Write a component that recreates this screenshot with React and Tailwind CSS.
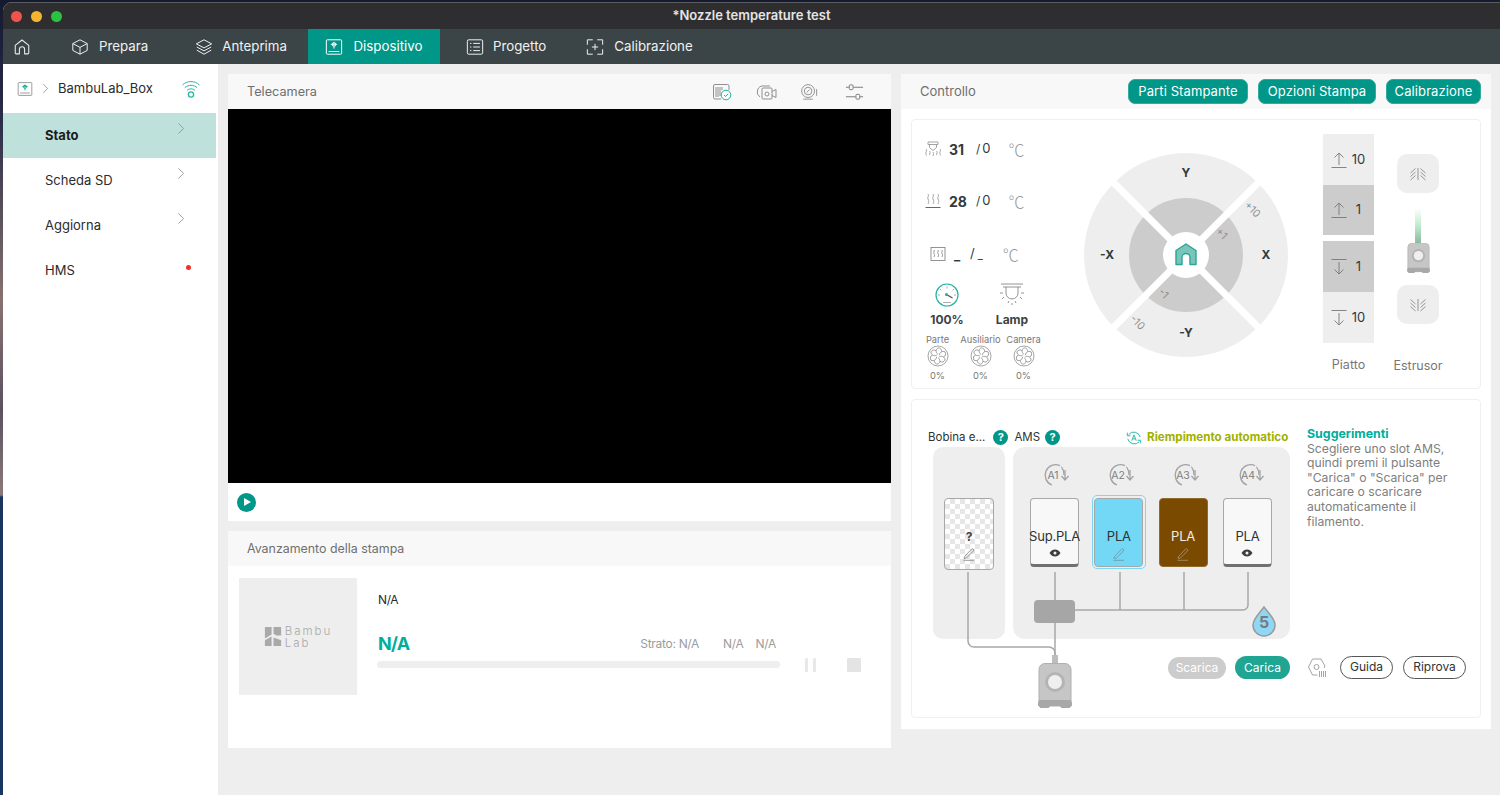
import React from "react";

const font = { fontFamily: "Inter, 'Noto Sans', sans-serif" };

// top bar icons
const HomeIcon = ({ className = "" }) => (
  <svg viewBox="0 0 20 20" className={className} fill="none" stroke="currentColor" strokeWidth="1.2" strokeLinejoin="round">
    <path d="M2.5 8.2 10 2.2l7.5 6v8.4a1 1 0 0 1-1 1h-3.6v-5a2.9 2.9 0 0 0-5.8 0v5H3.5a1 1 0 0 1-1-1z" />
  </svg>
);
const BoxIcon = ({ className = "" }) => (
  <svg viewBox="0 0 20 20" className={className} fill="none" stroke="currentColor" strokeWidth="1.1" strokeLinejoin="round">
    <path d="M10 2 18 6.2v7.6L10 18l-8-4.2V6.2z" />
    <path d="M2 6.2 10 10.4l8-4.2M10 10.4V18" />
  </svg>
);
const LayersIcon = ({ className = "" }) => (
  <svg viewBox="0 0 20 20" className={className} fill="none" stroke="currentColor" strokeWidth="1.1" strokeLinejoin="round">
    <path d="M10 2 18.5 6.5 10 11 1.5 6.5z" />
    <path d="M2 10 10 14.3l8-4.3M2 13.5 10 18l8-4.5" />
  </svg>
);
const DeviceIcon = ({ className = "", accent = "currentColor" }) => (
  <svg viewBox="0 0 20 20" className={className} fill="none" stroke="currentColor" strokeWidth="1.1">
    <rect x="1.5" y="2" width="17" height="16" rx="1" />
    <path d="M4 15h12" />
    <path d="M6.5 7h7M10 4.4v1.2M8.5 5.6h3v3.2h-3zM10 8.8v3" stroke={accent} />
  </svg>
);
const ListIcon = ({ className = "" }) => (
  <svg viewBox="0 0 20 20" className={className} fill="none" stroke="currentColor" strokeWidth="1.1">
    <rect x="1.5" y="2" width="17" height="16" rx="1.5" />
    <path d="M4.5 6H6M8 6h7.5M4.5 10H6M8 10h7.5M4.5 14H6M8 14h7.5" />
  </svg>
);
const CalibIcon = ({ className = "" }) => (
  <svg viewBox="0 0 20 20" className={className} fill="none" stroke="currentColor" strokeWidth="1.1">
    <path d="M1.5 7.5V2h6M12.5 2h6v5.5M18.5 12.5V18h-6M7.5 18h-6v-5.5" />
    <path d="M10 6.5v7M6.500 10h7" />
  </svg>
);
const Chevron = ({ className = "" }) => (
  <svg viewBox="0 0 8 14" className={className} fill="none" stroke="currentColor" strokeWidth="1">
    <path d="M1.2 1.5 6.8 7l-5.6 5.5" />
  </svg>
);

const Tab = ({ icon, label, active, className = "" }) => (
  <div className={`flex h-full items-center text-[13.3px] ${active ? "bg-[#009688] text-white" : "text-[#f0f2f2]"} ${className}`}>
    {icon}
    <span>{label}</span>
  </div>
);

const SideRow = ({ label, active, dot }) => (
  <div className={`mr-[2px] flex h-[45px] items-center justify-between pl-[42px] pr-[31px] text-[13px] ${active ? "bg-[#bfe1dc] font-bold text-[#1c1c1c]" : "text-[#2b2b2b]"}`}>
    <span className="pt-[1px]">{label}</span>
    {dot ? (
      <span className="mb-[7px] mr-[-6px] h-[5px] w-[5px] rounded-full bg-[#f0312b]" />
    ) : (
      <Chevron className={`mb-[15px] h-[13px] w-[8px] ${active ? "text-[#8a9a97]" : "text-[#9a9a9a]"}`} />
    )}
  </div>
);

const PanelHead = ({ title, titleClass = "text-[12.7px]", children }) => (
  <div className="flex h-[35px] shrink-0 items-center justify-between bg-[#f8f8f8] pl-[19px] text-[#6f6f6f]">
    <span className={`pt-[1px] ${titleClass}`}>{title}</span>
    {children}
  </div>
);

const CamIcons = () => (
  <div className="flex items-center gap-[23px] pr-[27px] text-[#8f8f8f]">
    <svg viewBox="0 0 20 18" className="h-[18px] w-[20px]" fill="none" stroke="currentColor" strokeWidth="1">
      <path d="M9 16H3a1.5 1.5 0 0 1-1.5-1.5V3A1.5 1.5 0 0 1 3 1.5h12.5A1.5 1.5 0 0 1 17 3v4" />
      <path d="M4 4v10M6 4v10M8 4v9M10 4v3" />
      <circle cx="14" cy="12" r="4.8" stroke="#19b3a3" fill="#fff" />
      <path d="m12 12 1.5 1.5 2.6-2.800" stroke="#19b3a3" />
    </svg>
    <svg viewBox="0 0 22 18" className="h-[18px] w-[22px]" fill="none" stroke="currentColor" strokeWidth="1">
      <path d="M5 14a6 6 0 0 1 4-11h6" />
      <rect x="7" y="5" width="10" height="11" rx="1" />
      <circle cx="12" cy="11" r="2" />
      <path d="M17 8.5 21 6.5v8L17 12.5" />
    </svg>
    <svg viewBox="0 0 20 18" className="h-[18px] w-[19px]" fill="none" stroke="currentColor" strokeWidth="1">
      <circle cx="8.5" cy="8" r="6.8" />
      <circle cx="8.5" cy="8" r="4" />
      <path d="m7 9.5 3-3M3.5 16.5h10M17.500 6v7" />
    </svg>
    <svg viewBox="0 0 20 18" className="ml-[3px] h-[18px] w-[19px]" fill="none" stroke="#777" strokeWidth="1">
      <path d="M1 4h3M9 4h10M1 14h10M16 14h3" />
      <rect x="4.5" y="1.5" width="4" height="5" rx="1" />
      <rect x="11.5" y="11.5" width="4" height="5" rx="1" />
    </svg>
  </div>
);

const PillButton = ({ label, className = "" }) => (
  <div className={`flex h-[25px] items-center justify-center rounded-[7px] border border-[#33ab9b] bg-[#009688] text-[13px] tracking-[0.1px] text-white ${className}`}>
    {label}
  </div>
);

const Celsius = ({ className = "" }) => (
  <span className={`font-['Noto_Sans_CJK_SC'] text-[16px] font-light leading-[20px] text-[#9a9a9a] ${className}`}>℃</span>
);

const Temp = ({ icon, value, target, className = "" }) => (
  <div className={`flex h-[20px] items-center ${className}`}>
    {icon}
    <span className="ml-[8px] w-[27px] text-[14px] font-bold text-[#323a3d]">{value}</span>
    <span className="text-[13px] text-[#323a3d]">
      <span className="mr-[2px] text-[12px]">/</span>{target}
    </span>
    <Celsius className="ml-[18px]" />
  </div>
);

const FanBlock = ({ label, value }) => (
  <div className="flex w-[43px] flex-col items-center text-[9.3px] text-[#777]">
    <span className="whitespace-nowrap leading-[12px]">{label}</span>
    <svg viewBox="0 0 22 22" className="mt-[-1px] h-[22px] w-[22px]" fill="none" stroke="#8f8f8f" strokeWidth="0.8">
      <circle cx="11" cy="11" r="10" />
      {[0, 60, 120, 180, 240, 300].map((r) => (
        <path key={r} transform={`rotate(${r} 11 11)`} d="M11 9.5C8.5 7.5 8.5 4.5 11 2.8c2.6.2 3.8 1.8 3.6 3.8" />
      ))}
    </svg>
    <span className="mt-[3px] leading-[11px]">{value}</span>
  </div>
);

const JogWheel = () => (
  <svg viewBox="0 0 206 206" className="h-[206px] w-[206px]">
    <circle cx="103" cy="103" r="102" fill="#eeeeee" />
    <circle cx="103" cy="103" r="57" fill="#cccccc" />
    <path d="M30 30 176 176M176 30 30 176" stroke="#fff" strokeWidth="7" />
    <circle cx="103" cy="103" r="23" fill="#fff" />
    <path d="M93 98.5 103 92l10 6.5v14h-6v-7a4 4 0 0 0-8 0v7h-6z" fill="#7ac4b9" stroke="#2ba595" strokeWidth="1.4" strokeLinejoin="round" />
    <g fontFamily="Inter, sans-serif" fontSize="12" fontWeight="700" fill="#323a3d" textAnchor="middle">
      <text x="103" y="25">Y</text>
      <text x="103" y="185">-Y</text>
      <text x="24" y="107">-X</text>
      <text x="183" y="107">X</text>
    </g>
    <g fontFamily="Inter, sans-serif" fontSize="10.5" fill="#8f8f8f" textAnchor="middle">
      <text transform="translate(167 60) rotate(45)">+10</text>
      <text transform="translate(136 84) rotate(45)">+1</text>
      <text transform="translate(78 144) rotate(45)" fill="#8a8a8a">-1</text>
      <text transform="translate(52 173) rotate(45)">-10</text>
    </g>
  </svg>
);

const ArrowUp = () => (
  <svg viewBox="0 0 16 18" className="h-[18px] w-[16px]" fill="none" stroke="#777" strokeWidth="0.9">
    <path d="M8 14V2M3.5 6.5 8 2l4.5 4.5M.5 16.5h15" />
  </svg>
);
const ArrowDown = () => (
  <svg viewBox="0 0 16 18" className="h-[18px] w-[16px]" fill="none" stroke="#777" strokeWidth="0.9">
    <path d="M8 4v12M3.5 11.5 8 16l4.5-4.5M.5 1.5h15" />
  </svg>
);

const BedCell = ({ dir, value, dark, className = "h-[51px]" }) => (
  <div className={`flex items-center justify-center gap-[4px] text-[13px] text-[#323a3d] ${dark ? "bg-[#cccccc]" : "bg-[#eeeeee]"} ${className}`}>
    {dir === "up" ? <ArrowUp /> : <ArrowDown />}
    <span className="w-[16px] text-center">{value}</span>
  </div>
);

const Extruder = ({ className = "" }) => (
  <svg viewBox="0 0 34 45" className={className}>
    <path d="M7 .5h20a6 6 0 0 1 6 6V38l1 4-3 3h-7l-2-2H12l-2 2H3l-3-3 1-4V6.5a6 6 0 0 1 6-6z" fill="#c6c6c6" stroke="#b0b0b0" />
    <path d="M1 37h32l1 5-3 3h-7l-2-2H12l-2 2H3l-3-3z" fill="#a8a8a8" />
    <circle cx="17" cy="19" r="10" fill="#b4b4b4" />
    <circle cx="17" cy="19" r="7" fill="#efefef" />
  </svg>
);

const ExtrudeBtn = ({ up }) => (
  <div className="flex h-[39px] w-[42px] items-center justify-center rounded-[10px] bg-[#eeeeee]">
    <svg viewBox="0 0 18 14" className="h-[14px] w-[18px]" fill="none" stroke="#8a8a8a" strokeWidth="0.9">
      {up ? (
        <path d="M9 1v12M6.5 1.5l-5 4.500M6.500 5l-5 4.500M6.500 8.500l-5 4.500M11.500 1.500l5 4.500M11.500 5l5 4.500M11.500 8.500l5 4.500" />
      ) : (
        <path d="M9 1v12M6.5 6l-5-4.500M6.500 9.500l-5-4.500M6.500 13l-5-4.500M11.500 6l5-4.500M11.500 9.500l5-4.500M11.500 13l5-4.500" />
      )}
    </svg>
  </div>
);

const HelpDot = () => (
  <span className="flex h-[15px] w-[15px] items-center justify-center rounded-full bg-[#009688] text-[11px] font-bold leading-none text-white">?</span>
);

const Pencil = ({ color = "#8d8d8d", className = "" }) => (
  <svg viewBox="0 0 14 14" className={`h-[14px] w-[14px] ${className}`} fill="none" stroke={color} strokeWidth="0.9">
    <path d="M2.5 9.5 9.5 2.2a1.2 1.2 0 0 1 1.8 0 1.2 1.2 0 0 1 0 1.8L4.5 11l-2.500.5zM1.5 13.3H12" />
  </svg>
);

const Eye = () => (
  <svg viewBox="0 0 12 8" className="h-[8px] w-[12px]">
    <path d="M.5 4C2 1.5 4 .5 6 .5s4 1 5.5 3.5C10 6.5 8 7.500 6 7.500S2 6.500.5 4z" fill="#3a3f42" />
    <circle cx="6" cy="4" r="1.5" fill="#f5f5f5" />
  </svg>
);

const SlotLabel = ({ label }) => (
  <div className="flex h-[22px] w-[30px] items-center justify-center">
    <svg viewBox="0 0 30 24" className="h-[24px] w-[30px]" fill="none" stroke="#a3a3a3" strokeWidth="1.3">
      <path d="M19 2.6A10.5 10.5 0 1 0 11 22M21 5v-.1a10 10 0 0 1 2 7.1" />
      <path d="M24 7v9M20.5 13l3.5 4 3.500-4" />
      <text x="12" y="16" fontFamily="Inter, sans-serif" fontSize="10.5" stroke="none" fill="#7e7e7e" textAnchor="middle">{label}</text>
    </svg>
  </div>
);

const Slot = ({ name, bg, text, icon, border = "border-[#a8a8a8]", pencil, bottom }) => (
  <div className={`flex h-[69px] w-[49px] flex-col items-center justify-end rounded-[4px] border ${border} ${bottom ? "border-b-[3px] border-b-[#707070]" : ""} ${bg}`}>
    <span className={`whitespace-nowrap text-[13px] leading-[16px] tracking-[-0.2px] ${text}`}>{name}</span>
    <span className={`flex h-[14px] items-center ${icon === "eye" ? "mb-[4px] mt-[2px]" : "mb-[5px] mt-[3px]"}`}>
      {icon === "eye" ? <Eye /> : <Pencil color={pencil} />}
    </span>
  </div>
);

const AmsGraphic = () => (
  <div className="relative h-[262px] w-[357px]">
    <div className="flex h-[192px] gap-[8px]">
      <div className="flex w-[72px] items-start justify-center rounded-[10px] bg-[#eeeeee] pt-[51px]">
        <div className="flex h-[72px] w-[50px] flex-col items-center justify-end rounded-[4px] border border-[#a8a8a8] bg-[repeating-conic-gradient(#e6e6e6_0_25%,#ffffff_0_50%)] bg-[length:10px_10px] pb-[8px]">
          <span className="text-[12px] font-bold leading-[16px] text-[#444]">?</span>
          <Pencil className="mt-[2px]" />
        </div>
      </div>
      <div className="flex w-[277px] flex-col rounded-[12px] bg-[#eeeeee] pl-[14px] pt-[17px]">
        <div className="flex gap-[8px]">
          {["A1", "A2", "A3", "A4"].map((a) => (
            <div key={a} className="flex w-[57px] justify-center"><SlotLabel label={a} /></div>
          ))}
        </div>
        <div className="ml-[-1px] mt-[9px] flex items-center gap-[7.3px]">
          <div className="flex w-[57px] justify-center">
            <Slot name="Sup.PLA" bg="bg-[#f8f8f8]" text="text-[#2e3335]" icon="eye" bottom />
          </div>
          <div className="flex w-[57px] justify-center">
            <div className="rounded-[5px] border-[1.5px] border-[#7fd8f3] p-[1.5px]">
              <Slot name="PLA" bg="bg-[#73d8f5]" text="text-[#2e3335]" pencil="#6f98a8" />
            </div>
          </div>
          <div className="flex w-[57px] justify-center">
            <Slot name="PLA" bg="bg-[#7a4a00]" text="text-[#f5ece0]" border="border-[#8f6a2e]" pencil="#a88d6c" />
          </div>
          <div className="flex w-[57px] justify-center">
            <Slot name="PLA" bg="bg-[#f8f8f8]" text="text-[#2e3335]" icon="eye" bottom />
          </div>
        </div>
      </div>
    </div>
    <div className="mt-[18px] flex justify-end gap-[9px] text-[12px] text-white">
      <span className="flex h-[22px] w-[58px] items-center justify-center rounded-full bg-[#cccccc]">Scarica</span>
      <span className="mt-[-1px] flex h-[23px] w-[55px] items-center justify-center rounded-full bg-[#20a593]">Carica</span>
    </div>
    {/* filament tubes and the hub sit on top of the two grey boxes */}
    <svg viewBox="0 0 357 262" className="pointer-events-none absolute left-0 top-0 h-[262px] w-[357px]" fill="none" stroke="#a8a8a8" strokeWidth="1.5">
      <path d="M35 125v69a6 6 0 0 0 6 6h75a6 6 0 0 1 6 6v4" />
      <path d="M122 125v85M187 125v38M251 125v38M315 125v33a5 5 0 0 1-5 5H135" />
      <rect x="101" y="153" width="41" height="23" rx="4" fill="#a6a6a6" stroke="none" />
      <rect x="119" y="208" width="6" height="9" fill="#bdbdbd" stroke="none" />
      <path d="M331 160c6 8 11 12 11 18a11 11 0 0 1-22 0c0-6 5-10 11-18z" fill="#8fd8f5" stroke="#9a9a9a" />
      <text x="331" y="181" fontFamily="Inter, sans-serif" fontSize="16" fontWeight="700" stroke="none" fill="#7a7a7a" textAnchor="middle">5</text>
    </svg>
    <Extruder className="absolute left-[105px] top-[216px] h-[45px] w-[34px]" />
  </div>
);

const BambuLogo = () => (
  <div className="flex items-center gap-[2px] text-[#a9a9a9]">
    <svg viewBox="0 0 18 22" className="h-[21px] w-[19px]" fill="#a9a9a9">
      <path d="M0 1h7v8l-7 4zM9 1h8v9h-5l-3-2zM0 15l7-4v10H0zM9 12l8 3v6H9z" />
    </svg>
    <span className="flex flex-col text-[11.5px] font-light leading-[12px] tracking-[2px]">
      <span>Bambu</span>
      <span>Lab</span>
    </span>
  </div>
);

export default function App() {
  return (
    <div className="flex h-[795px] w-[1500px] overflow-hidden bg-[linear-gradient(180deg,#141a30_0px,#2a2c48_120px,#86726f_300px,#5d5062_410px,#8a7a78_495px,#1a3560_497px,#1a3560_795px)]" style={font}>
      <div className="ml-[3px] mt-[2px] flex h-full flex-1 flex-col overflow-hidden rounded-tl-[9px] bg-[#eeeeee]">
        {/* title bar */}
        <div className="relative flex h-[27px] shrink-0 items-center border-t border-[#5c5c5c] bg-[#2e2e30] pl-[8px]">
          <div className="flex gap-[9px]">
            <span className="h-[11px] w-[11px] rounded-full bg-[#f0524c]" />
            <span className="h-[11px] w-[11px] rounded-full bg-[#f6b52c]" />
            <span className="h-[11px] w-[11px] rounded-full bg-[#2bc23f]" />
          </div>
          <span className="absolute left-0 right-0 text-center text-[13px] font-semibold text-[#e4e4e4]">*Nozzle temperature test</span>
        </div>

        {/* nav */}
        <div className="flex h-[35px] shrink-0 items-center bg-[#3b4446] text-[#f0f2f2]">
          <HomeIcon className="ml-[10px] h-[18px] w-[18px] text-[#e8ecec]" />
          <Tab className="ml-[40px]" icon={<BoxIcon className="mr-[10px] h-[18px] w-[18px]" />} label="Prepara" />
          <Tab className="ml-[47px]" icon={<LayersIcon className="mr-[9px] h-[18px] w-[18px]" />} label="Anteprima" />
          <Tab active className="ml-[21px] w-[132px] justify-center" icon={<DeviceIcon className="mr-[10px] h-[18px] w-[18px]" />} label="Dispositivo" />
          <Tab className="ml-[26px]" icon={<ListIcon className="mr-[9px] h-[18px] w-[18px]" />} label="Progetto" />
          <Tab className="ml-[40px]" icon={<CalibIcon className="mr-[10px] h-[18px] w-[18px]" />} label="Calibrazione" />
        </div>

        <div className="flex min-h-0 flex-1">
          {/* sidebar */}
          <div className="w-[215px] shrink-0 bg-white">
            <div className="flex h-[49px] items-center pl-[14px] pr-[17px] text-[13px] text-[#2b2b2b]">
              <DeviceIcon accent="#0fa896" className="h-[16px] w-[16px] text-[#8f8f8f]" />
              <Chevron className="ml-[9px] h-[11px] w-[7px] text-[#8a8a8a]" />
              <span className="ml-[9px]">BambuLab_Box</span>
              <svg viewBox="0 0 20 20" className="ml-auto h-[20px] w-[20px]" fill="none" stroke="#2fb7a6" strokeWidth="1">
                <path d="M1.5 6c4.5-4.6 12.5-4.6 17 0M3.8 8.800c3.300-3.300 9.100-3.300 12.400 0M6 11.500c2.200-2.200 5.800-2.200 8 0" />
                <circle cx="10" cy="15.5" r="2.6" strokeWidth="1.4" />
              </svg>
            </div>
            <SideRow label="Stato" active />
            <SideRow label="Scheda SD" />
            <SideRow label="Aggiorna" />
            <SideRow label="HMS" dot />
          </div>

          {/* main */}
          <div className="flex min-w-0 flex-1 items-start gap-[10px] pl-[10px] pt-[10px]">
            <div className="flex w-[663px] shrink-0 flex-col gap-[10px]">
              <div className="flex h-[447px] flex-col bg-white">
                <PanelHead title="Telecamera"><CamIcons /></PanelHead>
                <div className="h-[374px] bg-black" />
                <div className="flex flex-1 items-center pl-[9px]">
                  <span className="flex h-[19px] w-[19px] items-center justify-center rounded-full bg-[#009688]">
                    <span className="ml-[2px] h-0 w-0 border-y-[4.5px] border-l-[7px] border-y-transparent border-l-white" />
                  </span>
                </div>
              </div>

              <div className="flex h-[217px] flex-col bg-white">
                <PanelHead title="Avanzamento della stampa" titleClass="text-[12.4px]" />
                <div className="flex pl-[11px] pt-[12px]">
                  <div className="flex h-[117px] w-[118px] shrink-0 items-center justify-center bg-[#eeeeee]">
                    <BambuLogo />
                  </div>
                  <div className="ml-[20px] flex w-[403px] flex-col">
                    <span className="mt-[14px] pl-[1px] text-[12px] leading-[15px] tracking-[-0.4px] text-[#2b2b2b]">N/A</span>
                    <div className="mt-[26px] flex items-end justify-between pl-[1px] pr-[4px]">
                      <span className="text-[18px] font-bold leading-[22px] tracking-[-0.8px] text-[#00ae9b]">N/A</span>
                      <div className="flex gap-[12px] pb-[4px] text-[12px] leading-[15px] tracking-[-0.3px] text-[#9c9c9c]">
                        <span className="mr-[12px]">Strato: N/A</span>
                        <span>N/A</span>
                        <span>N/A</span>
                      </div>
                    </div>
                    <div className="mt-[6px] h-[7px] rounded-full bg-[#eeeeee]" />
                  </div>
                  <div className="ml-[25px] mt-[80px] flex h-[14px] items-center">
                    <span className="h-[14px] w-[3px] rounded-[1px] bg-[#e8e8e8]" />
                    <span className="ml-[5px] h-[14px] w-[3px] rounded-[1px] bg-[#e8e8e8]" />
                    <span className="ml-[31px] h-[14px] w-[14px] rounded-[1px] bg-[#e4e4e4]" />
                  </div>
                </div>
              </div>
            </div>

            {/* control panel */}
            <div className="flex h-[655px] w-[590px] shrink-0 flex-col bg-white">
              <div className="flex h-[35px] shrink-0 items-center justify-between bg-[#f8f8f8] pl-[19px] pr-[10px] text-[13px] text-[#6f6f6f]">
                <span className="pt-[1px]">Controllo</span>
                <div className="flex gap-[10px]">
                  <PillButton label="Parti Stampante" className="w-[120px]" />
                  <PillButton label="Opzioni Stampa" className="w-[118px]" />
                  <PillButton label="Calibrazione" className="w-[95px]" />
                </div>
              </div>

              <div className="mx-[10px] mt-[10px] flex h-[270px] shrink-0 rounded-[4px] border border-[#f0f0f0]">
                <div className="flex w-[171px] shrink-0 flex-col pl-[13px] pt-[19px]">
                  <Temp
                    value="31"
                    target="0"
                    icon={
                      <svg viewBox="0 0 16 16" className="h-[16px] w-[16px]" fill="none" stroke="#999" strokeWidth="0.9">
                        <path d="M3 1h10v2.5H3zM4.5 3.5v3L8 9.500l3.500-3v-3M1 8c1 1 .5 2 0 3s0 2 .5 3.500M4.500 10c1 1 .5 2 0 4M8 11c1 1 .5 2 0 4M11.500 10c1 1 .5 2 0 4M15 8c1 1 .5 2 0 3s0 2 .5 3.500" />
                      </svg>
                    }
                  />
                  <Temp
                    className="mt-[32px]"
                    value="28"
                    target="0"
                    icon={
                      <svg viewBox="0 0 16 16" className="h-[16px] w-[16px]" fill="none" stroke="#999" strokeWidth="0.9">
                        <path d="M3 1c1.5 2-1 3 0 5s1 3 0 5M8 1c1.5 2-1 3 0 5s1 3 0 5M13 1c1.5 2-1 3 0 5s1 3 0 5" />
                        <path d="M.5 14.5h15" stroke="#555" />
                      </svg>
                    }
                  />
                  <div className="ml-[5px] mt-[33px] flex h-[20px] items-center">
                    <svg viewBox="0 0 16 16" className="h-[16px] w-[16px]" fill="none" stroke="#888" strokeWidth="0.9">
                      <rect x="1" y="1.5" width="14" height="13" />
                      <path d="M4 4c1 1.500-1 2 0 3.500s.5 2 0 3.500M8 4c1 1.500-1 2 0 3.500s.5 2 0 3.500M12 4c1 1.500-1 2 0 3.500s.5 2 0 3.500" />
                    </svg>
                    <span className="ml-[8px] w-[15px] pt-[3px] text-[13px] font-bold text-[#323a3d]">_</span>
                    <span className="ml-[1px] text-[13px] text-[#323a3d]">/</span>
                    <span className="ml-[3px] pt-[2px] text-[11px] text-[#323a3d]">_</span>
                    <Celsius className="ml-[20px]" />
                  </div>
                  <div className="ml-[2px] mt-[19px] flex">
                    <div className="flex w-[40px] flex-col items-center">
                      <svg viewBox="0 0 24 24" className="h-[24px] w-[24px]" fill="none" stroke="#26b3a3" strokeWidth="1.2">
                        <circle cx="12" cy="12" r="11" />
                        <path d="M12 3.5v2M5 6l1.500 1.500M19 6l-1.500 1.500M3 12h2M19 12h2M8 19.500h8" stroke="#999" strokeWidth="0.8" />
                        <path d="m11.5 11.5 6 3.500" stroke="#555" strokeWidth="1.4" />
                        <circle cx="11.5" cy="11.5" r="1" fill="#26b3a3" />
                      </svg>
                      <span className="mt-[5px] text-[12px] font-bold leading-[16px] text-[#3d4345]">100%</span>
                    </div>
                    <div className="ml-[25px] flex w-[40px] flex-col items-center">
                      <svg viewBox="0 0 24 24" className="h-[24px] w-[24px]" fill="none" stroke="#888" strokeWidth="0.9">
                        <path d="M1 1h22M3 4h18M6 4v6a6 6 0 0 0 12 0V4M0 10h3M21 10h3M2 16l2-2M22 16l-2-2M8 20l1-2M16 20l-1-2M12 22v-2" />
                      </svg>
                      <span className="mt-[5px] text-[12px] font-bold leading-[16px] text-[#3d4345]">Lamp</span>
                    </div>
                  </div>
                  <div className="ml-[-9px] mt-[6px] flex">
                    <FanBlock label="Parte" value="0%" />
                    <FanBlock label="Ausiliario" value="0%" />
                    <FanBlock label="Camera" value="0%" />
                  </div>
                </div>

                <div className="flex h-full items-center pt-[2px]">
                  <JogWheel />
                </div>

                <div className="ml-[34px] flex flex-col pt-[14px]">
                  <div className="flex w-[51px] flex-col">
                    <BedCell dir="up" value="10" />
                    <BedCell dir="up" value="1" dark className="h-[50px]" />
                    <BedCell dir="down" value="1" dark className="mt-[6px] h-[51px]" />
                    <BedCell dir="down" value="10" />
                  </div>
                  <span className="mt-[14px] text-center text-[12.5px] leading-[16px] text-[#777]">Piatto</span>
                </div>

                <div className="ml-[19px] flex w-[50px] flex-col items-center pt-[34px]">
                  <ExtrudeBtn up />
                  <div className="mt-[15px] h-[35px] w-[6px] bg-gradient-to-b from-[#ffffff] via-[#bfeccd] to-[#8fb8a0]" />
                  <Extruder className="h-[30px] w-[23px]" />
                  <div className="mt-[12px]"><ExtrudeBtn /></div>
                  <span className="mt-[34px] whitespace-nowrap text-[12.5px] leading-[16px] text-[#777]">Estrusor</span>
                </div>
              </div>

              <div className="mx-[10px] mt-[10px] flex h-[319px] shrink-0 rounded-[4px] border border-[#f0f0f0]">
                <div className="flex w-[390px] shrink-0 flex-col pl-[16px] pt-[28px]">
                  <div className="flex h-[19px] w-[370px] items-center text-[11.5px] text-[#2e3335]">
                    <span>Bobina e...</span>
                    <span className="ml-[8px]"><HelpDot /></span>
                    <span className="ml-[6px]">AMS</span>
                    <span className="ml-[5px]"><HelpDot /></span>
                    <svg viewBox="0 0 18 18" className="ml-[66px] h-[16px] w-[16px]" fill="none" stroke="#2fb7a6" strokeWidth="1.1">
                      <path d="M3 5a7.5 7.5 0 0 1 13 3M15 13A7.5 7.5 0 0 1 2 10M1.5 3v3.5H5M16.5 15v-3.5H13" />
                      <path d="M6.5 12 9 5.500l2.500 6.500M7.500 10h3" />
                    </svg>
                    <span className="ml-[5px] whitespace-nowrap text-[11.6px] font-bold text-[#a0b000]">Riempimento automatico</span>
                  </div>
                  <div className="ml-[5px]"><AmsGraphic /></div>
                </div>
                <div className="flex flex-col pl-[5px] pt-[27px] text-[12.2px] leading-[14.6px] text-[#7e7e7e]">
                  <span className="text-[12.4px] font-bold text-[#00ae9b]">Suggerimenti</span>
                  <span className="w-[150px]">Scegliere uno slot AMS, quindi premi il pulsante "Carica" o "Scarica" per caricare o scaricare automaticamente il filamento.</span>
                  <div className="mb-[38px] mt-auto flex items-center text-[12px] text-[#2e3335]">
                    <svg viewBox="0 0 21 21" className="h-[21px] w-[21px]" fill="none" stroke="#9a9a9a" strokeWidth="0.9">
                      <path d="M5.5 2H14l4 7-1 2M5.500 2 1.500 10l4 8h5" />
                      <circle cx="9.5" cy="10" r="2.5" />
                      <path d="M12.5 14v6M14.500 14v6M16.500 14v6M18.500 14v6" />
                    </svg>
                    <span className="ml-[12px] flex h-[23px] w-[53px] items-center justify-center rounded-full border border-[#555]">Guida</span>
                    <span className="ml-[10px] flex h-[23px] w-[63px] items-center justify-center rounded-full border border-[#555]">Riprova</span>
                  </div>
                </div>
              </div>
            </div>
          </div>
        </div>
      </div>
    </div>
  );
}
